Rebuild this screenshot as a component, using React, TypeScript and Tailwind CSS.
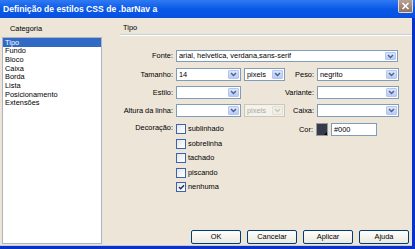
import React from 'react';

const font = { fontFamily: '"Liberation Sans", Arial, sans-serif' };

const Chevron = ({ disabled }: { disabled?: boolean }) => (
  <svg width="7" height="5" viewBox="0 0 7 5">
    <path d="M1 1 L3.5 3.5 L6 1" fill="none" stroke={disabled ? '#c9c7ba' : '#4d6185'} strokeWidth="1.4" />
  </svg>
);

const Select = ({ value, width, height = 13, disabled }: { value?: string; width: string; height?: number; disabled?: boolean }) => (
  <div
    className={`${width} flex items-stretch border ${disabled ? 'border-[#c9c7ba] bg-[#f4f2ea]' : 'border-[#7f9db9] bg-white'}`}
    style={{ height }}
  >
    <div className={`flex-1 flex items-center pl-[2px] overflow-hidden whitespace-nowrap ${disabled ? 'text-[#aca899]' : 'text-black'}`}>
      {value}
    </div>
    <div
      className={`w-[11px] m-px flex items-center justify-center rounded-[1px] ${
        disabled ? 'bg-[#f0efe7] border border-[#e2e0d6]' : 'bg-gradient-to-b from-[#dbe6fd] to-[#b8cbf7] border border-[#b4c6f0]'
      }`}
    >
      <Chevron disabled={disabled} />
    </div>
  </div>
);

const Check = ({ label, checked }: { label: string; checked?: boolean }) => (
  <div className="flex items-center h-[10px] gap-[2px]">
    <div className="w-[10px] h-[10px] border border-[#3d62b4] bg-gradient-to-br from-[#e6e6e0] to-white flex items-center justify-center">
      {checked && (
        <svg width="7" height="6" viewBox="0 0 7 6">
          <path d="M1 3 L2.7 4.7 L6 1.2" fill="none" stroke="#1f2c55" strokeWidth="1.4" />
        </svg>
      )}
    </div>
    <span>{label}</span>
  </div>
);

const Btn = ({ label }: { label: string }) => (
  <div className="w-[50px] h-[14px] rounded-[2px] border border-[#003c74] bg-gradient-to-b from-white to-[#ece9de] flex items-center justify-center text-black">
    {label}
  </div>
);

const categories = ['Tipo', 'Fundo', 'Bloco', 'Caixa', 'Borda', 'Lista', 'Posicionamento', 'Extensões'];

export default function App() {
  return (
    <div className="w-[415px] h-[249px] bg-[#0832c8] flex flex-col overflow-hidden text-[7.4px] leading-none" style={font}>
      {/* title bar */}
      <div className="h-[18px] flex items-start justify-between bg-gradient-to-b from-[#2f7af2] via-[#0a58e8] to-[#0851e0] pl-[3px] pr-[2px]">
        <span className="text-white font-bold text-[8.6px] mt-[5px]">Definição de estilos CSS de .barNav a</span>
        <div className="w-[15px] h-[13px] rounded-b-[2px] border border-[#e8dcd4] border-t-0 bg-gradient-to-b from-[#b9a294] to-[#8e7266] flex items-center justify-center">
          <svg width="9" height="8" viewBox="0 0 9 8">
            <path d="M1.5 1 L7.5 7 M7.5 1 L1.5 7" stroke="white" strokeWidth="1.6" />
          </svg>
        </div>
      </div>

      {/* body */}
      <div className="flex-1 flex bg-[#ece5d8] mr-[3px] mb-[3px] border-b border-[#c3cad6]">
        {/* categories */}
        <div className="w-[104px] flex flex-col pl-[2px] pb-[1px]">
          <div className="h-[19px] flex items-center pl-[8px] pt-[2px] text-black">Categoria</div>
          <div className="flex-1 border border-[#a9b4c4] bg-white mr-[2px]">
            {categories.map((c, i) => (
              <div
                key={c}
                className={`h-[8.7px] flex items-center pl-[2px] ${i === 0 ? 'bg-[#316ac5] text-white' : 'text-black'}`}
              >
                {c}
              </div>
            ))}
          </div>
        </div>

        {/* panel */}
        <div className="flex-1 flex flex-col ml-[16px] pb-[1px] pr-[3px] text-black">
          <div className="h-[16px] flex items-center pl-[3px] pt-[4px]">Tipo</div>
          <div className="h-[2px] bg-[#c4d0dc] border-b border-white -mr-[3px]" />

          <div className="flex flex-col mt-[14px]">
            <div className="flex items-center gap-[3px]">
              <span className="w-[53px] text-right">Fonte:</span>
              <Select value="arial, helvetica, verdana,sans-serif" width="w-[222px]" height={12} />
            </div>

            <div className="flex items-center gap-[3px] mt-[6px]">
              <span className="w-[53px] text-right">Tamanho:</span>
              <Select value="14" width="w-[65px]" />
              <Select value="pixels" width="w-[41px]" />
              <span className="w-[26px] text-right">Peso:</span>
              <Select value="negrito" width="w-[82px]" />
            </div>

            <div className="flex items-center gap-[3px] mt-[5px]">
              <span className="w-[53px] text-right">Estilo:</span>
              <Select width="w-[65px]" />
              <span className="w-[70px] text-right">Variante:</span>
              <Select width="w-[82px]" />
            </div>

            <div className="flex items-center gap-[3px] mt-[5px]">
              <span className="w-[53px] text-right">Altura da linha:</span>
              <Select width="w-[65px]" />
              <Select value="pixels" width="w-[41px]" disabled />
              <span className="w-[26px] text-right">Caixa:</span>
              <Select width="w-[82px]" />
            </div>

            <div className="flex items-start gap-[3px] mt-[6px]">
              <span className="w-[53px] text-right mt-[1px]">Decoração:</span>
              <div className="w-[110px] flex flex-col gap-[4.5px] mt-[1px]">
                <Check label="sublinhado" />
                <Check label="sobrelinha" />
                <Check label="tachado" />
                <Check label="piscando" />
                <Check label="nenhuma" checked />
              </div>
              <div className="flex items-center gap-[3px]">
                <span className="w-[24px] text-right">Cor:</span>
                <div className="relative w-[12px] h-[13px] border border-[#9a9a9a] bg-[#343b4d]">
                  <div className="absolute right-0 bottom-0 w-0 h-0 border-l-[3px] border-l-transparent border-b-[3px] border-b-black" />
                </div>
                <div className="w-[46px] h-[13px] border border-[#7f9db9] bg-white flex items-center pl-[2px]">#000</div>
              </div>
            </div>
          </div>

          <div className="flex-1" />
          <div className="flex justify-end gap-[6px]">
            <Btn label="OK" />
            <Btn label="Cancelar" />
            <Btn label="Aplicar" />
            <Btn label="Ajuda" />
          </div>
        </div>
      </div>
    </div>
  );
}
